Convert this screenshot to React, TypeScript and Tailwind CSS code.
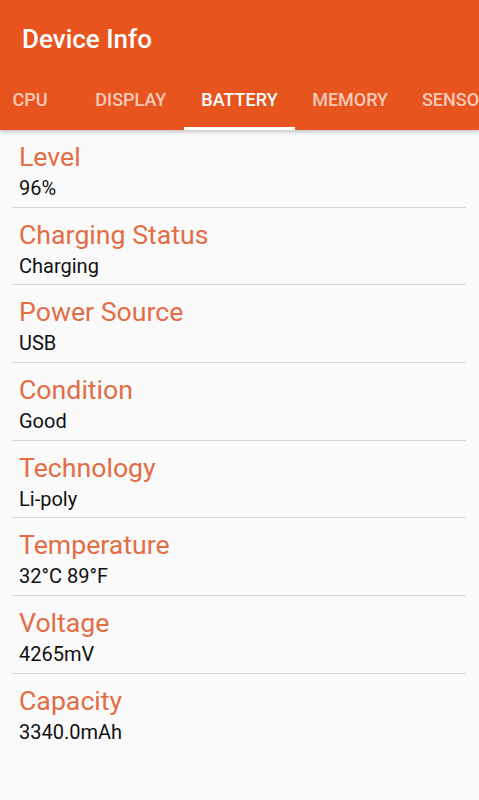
import React from "react";

const TABS = [
  { label: "CPU", width: "w-[96px] justify-center" },
  { label: "DISPLAY", width: "w-[105.7px] justify-center" },
  { label: "BATTERY", width: "w-[111.6px] justify-center", active: true },
  { label: "MEMORY", width: "w-[109.7px] justify-center" },
  { label: "SENSORS", width: "w-[130px] justify-start pl-[17px]" },
];

const ROWS = [
  { label: "Level", value: "96%" },
  { label: "Charging Status", value: "Charging" },
  { label: "Power Source", value: "USB" },
  { label: "Condition", value: "Good" },
  { label: "Technology", value: "Li-poly" },
  { label: "Temperature", value: "32°C 89°F" },
  { label: "Voltage", value: "4265mV" },
  { label: "Capacity", value: "3340.0mAh" },
];

export default function App() {
  return (
    <div
      className="w-[479px] h-[800px] bg-[#fafafa] overflow-hidden flex flex-col"
      style={{ fontFamily: "Roboto, 'Noto Sans', sans-serif" }}
    >
      {/* App bar + tabs */}
      <header className="bg-[#e8541e] shadow-[0_2px_4px_rgba(0,0,0,0.22)] relative z-10">
        <div className="h-[70px] pl-[22px] pt-[23px]">
          <h1 className="text-white text-[26px] leading-[32px] font-medium">Device Info</h1>
        </div>
        <div className="h-[60px] flex overflow-hidden">
          <div className="flex -ml-[18px] shrink-0">
            {TABS.map((tab) => (
              <div
                key={tab.label}
                className={`${tab.width} shrink-0 h-[60px] relative flex items-center text-[18px] leading-[20px] font-medium ${
                  tab.active ? "text-white" : "text-white/70"
                }`}
              >
                {tab.label}
                {tab.active && <span className="absolute left-0 right-0 bottom-0 h-[3px] bg-white" />}
              </div>
            ))}
          </div>
        </div>
      </header>

      {/* Battery details */}
      <div className="flex flex-col">
        {ROWS.map((row, idx) => (
          <div
            key={row.label}
            className={`ml-[12px] mr-[13px] pl-[7px] pt-[11px] pb-[6.7px] ${
              idx < ROWS.length - 1 ? "border-b border-[#d6d6d6]" : ""
            }`}
          >
            <div className="text-[#e36d45] text-[26.7px] leading-[32px]">{row.label}</div>
            <div className="mt-[3px] text-[#111] text-[20px] leading-[24px]">{row.value}</div>
          </div>
        ))}
      </div>
    </div>
  );
}
